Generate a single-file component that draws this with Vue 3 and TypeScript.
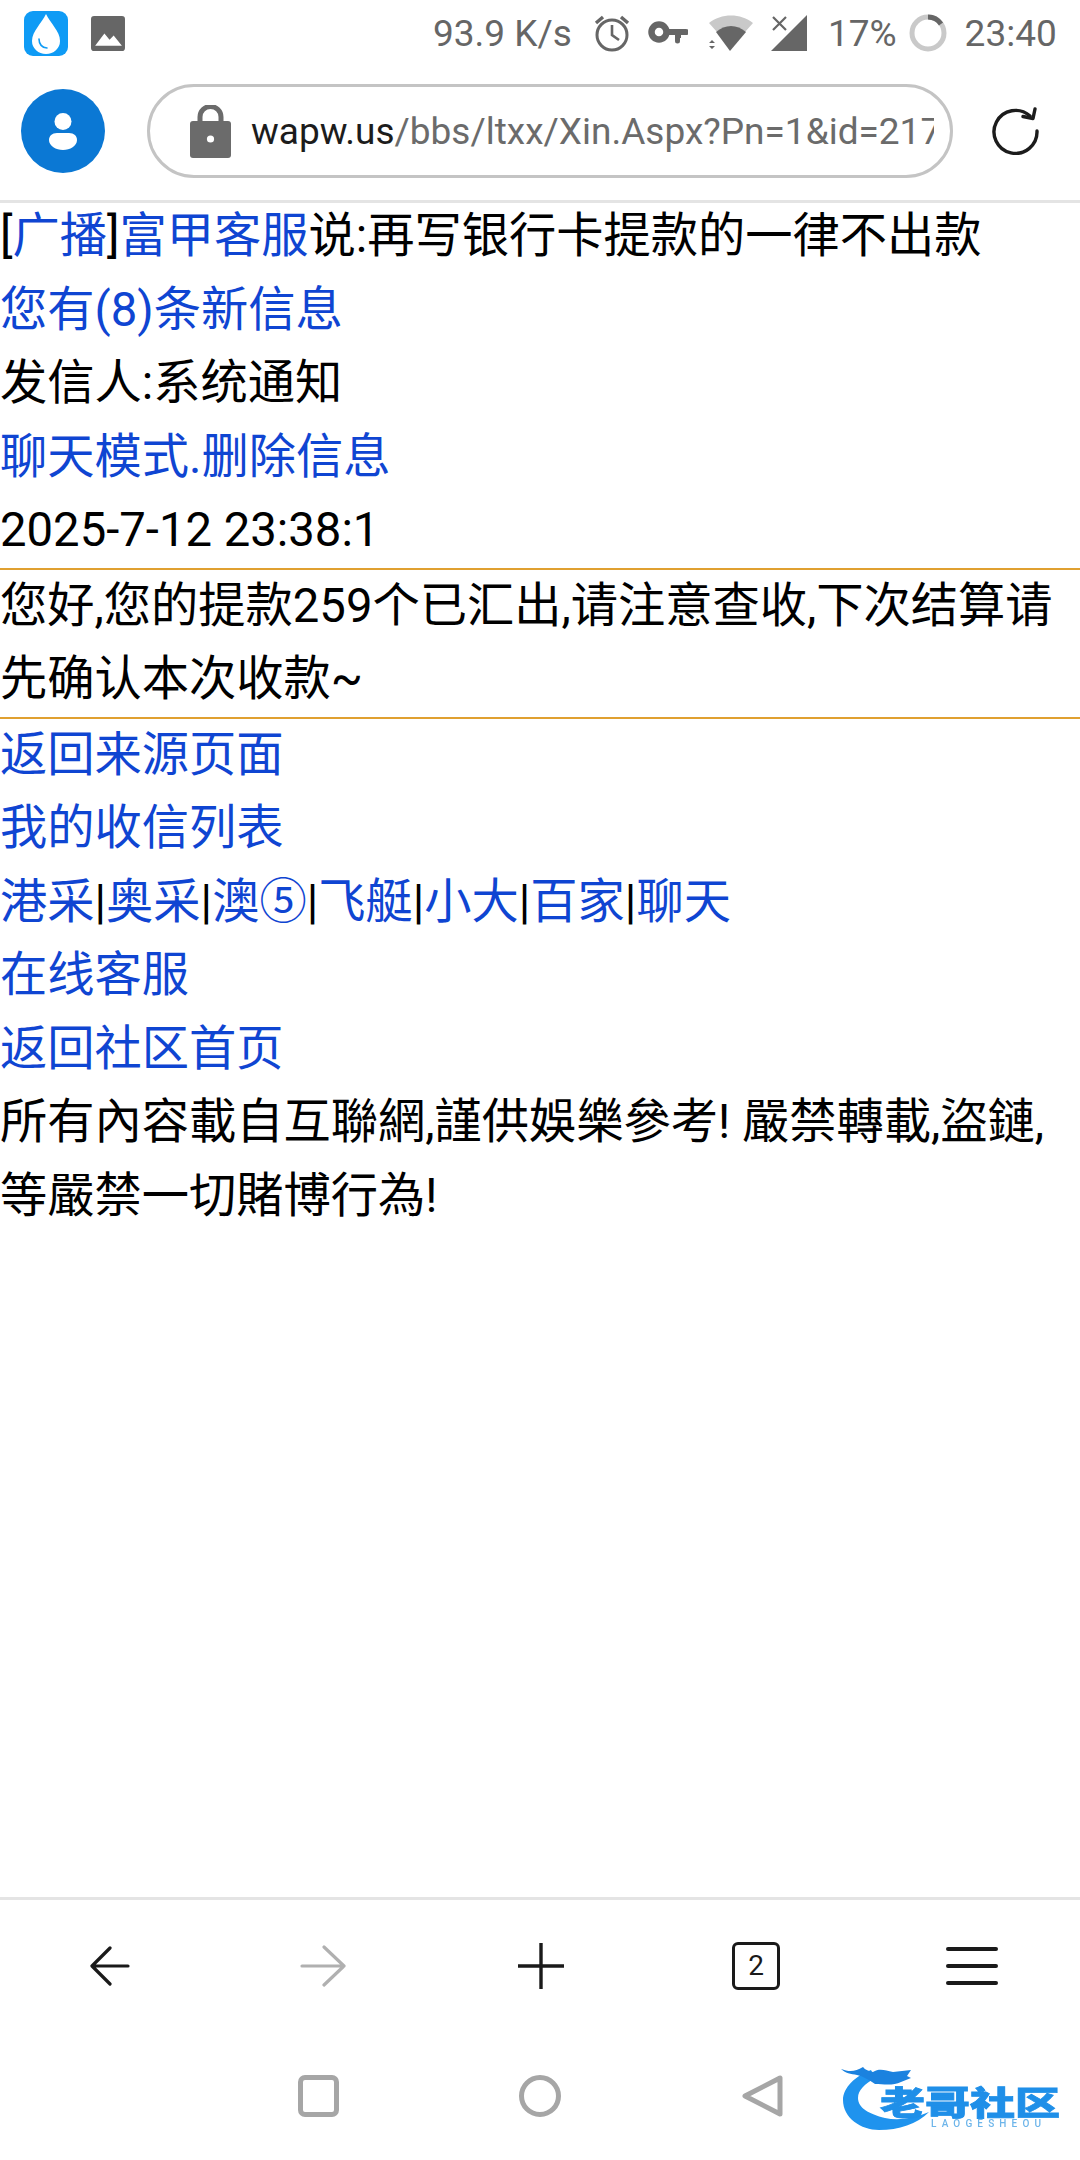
<script setup lang="ts">
interface Part {
  text: string
  link?: boolean
}

const topLines: Part[][] = [
  [
    { text: '[' },
    { text: '广播', link: true },
    { text: ']' },
    { text: '富甲客服', link: true },
    { text: '说:再写银行卡提款的一律不出款' }
  ],
  [{ text: '您有(8)条新信息', link: true }],
  [{ text: '发信人:系统通知' }],
  [{ text: '聊天模式.删除信息', link: true }],
  [{ text: '2025-7-12 23:38:1' }]
]

const message = '您好,您的提款259个已汇出,请注意查收,下次结算请先确认本次收款~'
const games = ['港采', '奥采', '澳⑤', '飞艇', '小大', '百家', '聊天']
</script>

<template>
  <div class="Phone">
    <div class="StatusBar">
      <svg class="AppIcon" width="44" height="45" viewBox="0 0 44 45">
        <rect width="44" height="45" rx="9" fill="#0f9bf5" />
        <path d="M22 3C18 12 8 20 8 30a14 13 0 0 0 28 0C36 20 26 12 22 3Z" fill="#fff" />
        <path d="M15 28c0 5 3 9 8 9" fill="none" stroke="#0f9bf5" stroke-width="1.6" stroke-linecap="round" />
      </svg>
      <svg class="ImageIcon" width="34" height="35" viewBox="0 0 33 34">
        <rect width="33" height="34" rx="3" fill="#666" />
        <path d="M4 29l9-12 5 6 4-4 8 10Z" fill="#fff" />
      </svg>
      <span class="Speed">93.9 K/s</span>
      <svg class="Alarm" width="36" height="38" viewBox="0 0 36 38">
        <circle cx="18" cy="21" r="15" fill="none" stroke="#666" stroke-width="3" />
        <path d="M18 11v10l7 5" fill="none" stroke="#666" stroke-width="2.6" />
        <path d="M2 9l7-6M34 9l-7-6" fill="none" stroke="#666" stroke-width="3.4" />
      </svg>
      <svg class="Key" width="40" height="24" viewBox="0 0 40 24">
        <circle cx="11" cy="11" r="7.5" fill="none" stroke="#666" stroke-width="6.5" />
        <path d="M18 8h20a2 2 0 0 1 0 6h-5v3h-1v3a2 2 0 0 1-5 0v-6h-9Z" fill="#666" />
      </svg>
      <svg class="Wifi" width="44" height="38" viewBox="0 0 44 38">
        <path d="M0 9C12-1 32-1 44 9L36 18C27 11 17 11 8 18Z" fill="#c9c9c9" />
        <path d="M7 18C16 10 28 10 37 18L21 37Z" fill="#666" />
        <path d="M0 29l3-3 3 3ZM0 32l3 3 3-3Z" fill="#666" />
      </svg>
      <svg class="Signal" width="37" height="38" viewBox="0 0 37 38">
        <path d="M36 1V37H0Z" fill="#666" />
        <path d="M2 3l13 13M15 3L2 16" fill="none" stroke="#666" stroke-width="2.2" />
      </svg>
      <span class="Battery">17%</span>
      <svg class="Ring" width="38" height="38" viewBox="0 0 38 38">
        <circle cx="19" cy="19" r="16" fill="none" stroke="#c9c9c9" stroke-width="5" />
        <path d="M19 3a16 16 0 0 1 13 7" fill="none" stroke="#666" stroke-width="5" />
      </svg>
      <span class="Clock">23:40</span>
    </div>

    <div class="Toolbar">
      <div class="Avatar">
        <svg width="28" height="37" viewBox="0 0 28 37">
          <circle cx="14" cy="8.5" r="8.5" fill="#fff" />
          <path d="M8 20h12c5 0 8 3 8 7 0 6-7 10-14 10S0 33 0 27c0-4 3-7 8-7Z" fill="#fff" />
        </svg>
      </div>
      <div class="UrlBar">
        <svg class="Lock" width="41" height="53" viewBox="0 0 41 53">
          <path d="M10 17V12a10.500 10.500 0 0 1 21 0v5" fill="none" stroke="#6b6b6b" stroke-width="5" />
          <rect y="16" width="41" height="37" rx="3" fill="#6b6b6b" />
          <circle cx="20.500" cy="34" r="3.600" fill="#fff" />
        </svg>
        <div class="Url"><span class="Host">wapw.us</span>/bbs/ltxx/Xin.Aspx?Pn=1&amp;id=217</div>
      </div>
      <svg class="Reload" width="48" height="48" viewBox="0 0 48 48">
        <path d="M38 9A21.500 21.500 0 1 0 45 24" fill="none" stroke="#1c1c1c" stroke-width="3.400" stroke-linecap="round" />
        <path d="M31 9.500L41 11.500L43 2" fill="none" stroke="#1c1c1c" stroke-width="3.400" stroke-linecap="round" stroke-linejoin="round" />
      </svg>
    </div>

    <div class="Content">
      <div v-for="(line, i) in topLines" :key="i" class="Line">
        <template v-for="(part, j) in line" :key="j">
          <a v-if="part.link" class="Link">{{ part.text }}</a>
          <template v-else>{{ part.text }}</template>
        </template>
      </div>
      <div class="Rule"></div>
      <div class="Line">{{ message }}</div>
      <div class="Rule"></div>
      <div class="Line"><a class="Link">返回来源页面</a></div>
      <div class="Line"><a class="Link">我的收信列表</a></div>
      <div class="Line">
        <template v-for="(game, i) in games" :key="game">
          <template v-if="i > 0">|</template><a class="Link">{{ game }}</a>
        </template>
      </div>
      <div class="Line"><a class="Link">在线客服</a></div>
      <div class="Line"><a class="Link">返回社区首页</a></div>
      <div class="Line">所有內容載自互聯網,謹供娛樂參考! 嚴禁轉載,盜鏈,等嚴禁一切賭博行為!</div>
    </div>

    <div class="BottomBar">
      <svg class="Back" width="40" height="40" viewBox="0 0 40 40">
        <path d="M38 20H3M20 2L2 20l18 18" fill="none" stroke="#1a1a1a" stroke-width="3.200" stroke-linecap="round" stroke-linejoin="round" />
      </svg>
      <svg class="Forward" width="46" height="42" viewBox="0 0 46 42">
        <path d="M2 21H44M24 2l20 19-20 19" fill="none" stroke="#b0b0b0" stroke-width="3.200" stroke-linecap="round" stroke-linejoin="round" />
      </svg>
      <svg class="Plus" width="46" height="46" viewBox="0 0 46 46">
        <path d="M0 23H46M23 0V46" fill="none" stroke="#1a1a1a" stroke-width="3.400" />
      </svg>
      <div class="Tabs">2</div>
      <div class="Menu"><i></i><i></i><i></i></div>
    </div>

    <div class="NavBar">
      <div class="NavSquare"></div>
      <div class="NavCircle"></div>
      <svg class="NavBack" width="41" height="42" viewBox="0 0 41 42">
        <path d="M3 21L38 3V39Z" fill="none" stroke="#a6a6a6" stroke-width="5" stroke-linejoin="round" />
      </svg>
      <svg class="Logo" width="222" height="80" viewBox="0 0 222 80">
        <path d="M30 14C14 20 2 32 2 44C2 62 20 74 38 74C58 74 76 68 88 56C74 62 58 65 44 62C28 58 17 52 17 42C17 34 24 28 34 22Z" fill="#1f93ee" />
        <path d="M0 13C8 16 14 16 22 11C24 14 28 15 32 16C38 12 44 14 52 16L70 14L66 20L70 22L60 26C52 30 42 28 34 28C28 24 22 20 16 19C10 18 4 17 0 13Z" fill="#1b82df" />
        <text class="LogoName" x="39" y="59" textLength="180" lengthAdjust="spacingAndGlyphs">老哥社区</text>
        <text class="LogoSub" x="90" y="71" textLength="110">LAOGESHEOU</text>
      </svg>
    </div>
  </div>
</template>

<style scoped>
.Phone {
  display: flex;
  flex-direction: column;
  width: 1080px;
  height: 2160px;
  overflow: hidden;
  background-color: white;
  font-family: Roboto, "Noto Sans CJK SC", sans-serif;
}

.StatusBar {
  display: flex;
  flex: none;
  align-items: center;
  height: 66px;
  padding-left: 24px;
  color: #666;
  font-size: 37px;
}

.ImageIcon {
  margin-left: 23px;
}

.Speed {
  margin-left: 308px;
}

.Alarm {
  margin-left: 22px;
}

.Key {
  margin-left: 18px;
}

.Wifi {
  margin-left: 21px;
}

.Signal {
  margin-left: 18px;
}

.Battery {
  margin-left: 20px;
}

.Ring {
  margin-left: 12px;
}

.Clock {
  margin-left: 18px;
}

.Toolbar {
  display: flex;
  flex: none;
  align-items: center;
  box-sizing: content-box;
  height: 130px;
  padding-bottom: 4px;
  padding-left: 21px;
  border-bottom: 3px solid #e4e4e4;
}

.Avatar {
  display: flex;
  flex: none;
  align-items: center;
  justify-content: center;
  width: 84px;
  height: 84px;
  border-radius: 50%;
  background-color: #0b78d4;
}

.UrlBar {
  display: flex;
  flex: none;
  align-items: center;
  box-sizing: border-box;
  width: 806px;
  height: 94px;
  margin-left: 42px;
  padding: 0 16px 0 40px;
  border: 3px solid #c4c4c4;
  border-radius: 47px;
}

.Lock {
  flex: none;
}

.Url {
  flex: 1;
  margin-left: 20px;
  overflow: hidden;
  color: #6b6b6b;
  font-size: 37px;
  white-space: nowrap;
}

.Host {
  color: #1c1c1c;
}

.Reload {
  margin-left: 39px;
}

.Content {
  flex: 1;
  margin-top: -3px;
  color: black;
  font-size: 47.25px;
  line-height: 73.5px;
}

.Line {
  min-height: 73.5px;
}

.Link {
  color: #0f45d2;
}

.Rule {
  height: 2px;
  background-color: #e0a030;
}

.BottomBar {
  display: flex;
  flex: none;
  align-items: center;
  height: 132px;
  padding-bottom: 6px;
  padding-left: 90px;
  border-top: 3px solid #e4e4e4;
}

.Forward {
  margin-left: 170px;
}

.Plus {
  margin-left: 172px;
}

.Tabs {
  box-sizing: border-box;
  width: 48px;
  height: 48px;
  margin-left: 168px;
  border: 3.500px solid #1a1a1a;
  border-radius: 6px;
  color: #1a1a1a;
  font-size: 28px;
  line-height: 41px;
  text-align: center;
}

.Menu {
  display: flex;
  flex-direction: column;
  gap: 13px;
  width: 52px;
  margin-left: 166px;
}

.Menu i {
  display: block;
  height: 4px;
  border-radius: 2px;
  background-color: #1a1a1a;
}

.NavBar {
  display: flex;
  flex: none;
  align-items: center;
  height: 116px;
  padding-bottom: 6px;
  padding-left: 298px;
}

.NavSquare {
  box-sizing: border-box;
  width: 41px;
  height: 42px;
  border: 5px solid #a6a6a6;
  border-radius: 7px;
}

.NavCircle {
  box-sizing: border-box;
  width: 42px;
  height: 42px;
  margin-left: 180px;
  border: 5px solid #a6a6a6;
  border-radius: 50%;
}

.NavBack {
  margin-left: 181px;
}

.Logo {
  flex: none;
  margin-left: 58px;
  filter: blur(0.6px);
}

.LogoName {
  fill: #1f8fe8;
  stroke: #1f8fe8;
  stroke-width: 0.8px;
  font-family: "Noto Sans CJK SC", sans-serif;
  font-size: 33px;
  font-weight: 900;
}

.LogoSub {
  fill: #6db5ea;
  font-family: Roboto, sans-serif;
  font-size: 10px;
  font-weight: 500;
}
</style>
